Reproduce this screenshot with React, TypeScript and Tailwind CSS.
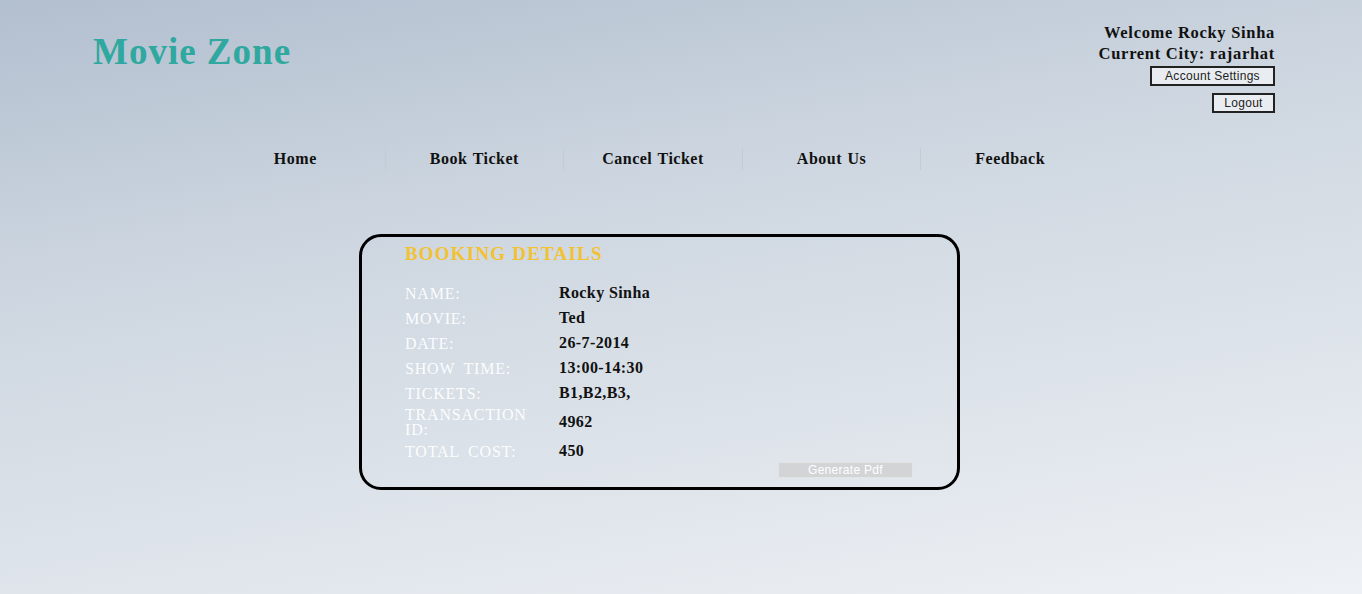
import React from 'react';

const serif = { fontFamily: '"Liberation Serif", "Times New Roman", serif' };
const sans = { fontFamily: '"Liberation Sans", Arial, sans-serif' };

const navItems = ['Home', 'Book Ticket', 'Cancel Ticket', 'About Us', 'Feedback'];

const details: { label: string; value: string }[] = [
  { label: 'NAME:', value: 'Rocky Sinha' },
  { label: 'MOVIE:', value: 'Ted' },
  { label: 'DATE:', value: '26-7-2014' },
  { label: 'SHOW TIME:', value: '13:00-14:30' },
  { label: 'TICKETS:', value: 'B1,B2,B3,' },
  { label: 'TRANSACTION ID:', value: '4962' },
  { label: 'TOTAL COST:', value: '450' },
];

export default function App() {
  return (
    <div
      className="w-[1362px] h-[594px] overflow-hidden bg-[linear-gradient(170deg,#b2bfcf_0%,#cdd6e0_35%,#dce2e9_65%,#eef1f5_100%)]"
      style={serif}
    >
      {/* Header */}
      <header className="flex justify-between pl-[93px] pr-[87px] pt-[22px]">
        <h1 className="text-[37px] font-bold text-[#2fa89f] leading-none mt-[11px] tracking-[1px]">Movie Zone</h1>
        <div className="flex flex-col items-end text-[16.5px] font-bold text-[#111] leading-[21px] tracking-[0.7px]">
          <div>Welcome Rocky Sinha</div>
          <div>Current City: rajarhat</div>
          <button
            className="mt-[2px] w-[125px] border-2 border-[#222] bg-[#e9edf1] h-[20px] text-[12px] font-normal leading-none tracking-[0.3px] text-[#222]"
            style={sans}
          >
            Account Settings
          </button>
          <button
            className="mt-[7px] w-[63px] border-2 border-[#222] bg-[#e9edf1] h-[20px] text-[12px] font-normal leading-none tracking-[0.3px] text-[#222]"
            style={sans}
          >
            Logout
          </button>
        </div>
      </header>

      {/* Navigation */}
      <nav className="flex pl-[206px] mt-[35px]">
        {navItems.map((item, i) => (
          <div
            key={item}
            className={`w-[178.6px] h-[22px] flex items-center justify-center text-[16px] font-bold text-[#111] tracking-[0.5px] [word-spacing:1px] ${
              i > 0 ? 'border-l border-[#c3cbd5]' : ''
            }`}
          >
            {item}
          </div>
        ))}
      </nav>

      {/* Booking card */}
      <section className="ml-[359px] mt-[64px] w-[601px] h-[256px] border-[3px] border-black rounded-[22px] pl-[43px] pr-[44px] pt-[3px]">
        <h2 className="text-[19px] font-bold text-[#f2c232] tracking-[1.2px]">BOOKING DETAILS</h2>
        <div className="mt-[12px] flex flex-col">
          {details.map((d) => (
            <div key={d.label} className="flex items-center min-h-[25px]">
              <div className="w-[154px] pr-[18px] py-[1.5px] text-[16px] leading-[15px] tracking-[0.8px] [word-spacing:4px] text-white/95">
                {d.label}
              </div>
              <div className="text-[16px] font-bold text-[#111] tracking-[0.4px]">{d.value}</div>
            </div>
          ))}
        </div>
        <div className="flex justify-end">
          <button
            className="-mt-[2px] w-[135px] h-[16px] bg-[#d3d4d6] border border-[#e3e4e6] text-white text-[12px] leading-none tracking-[0.3px]"
            style={sans}
          >
            Generate Pdf
          </button>
        </div>
      </section>
    </div>
  );
}
